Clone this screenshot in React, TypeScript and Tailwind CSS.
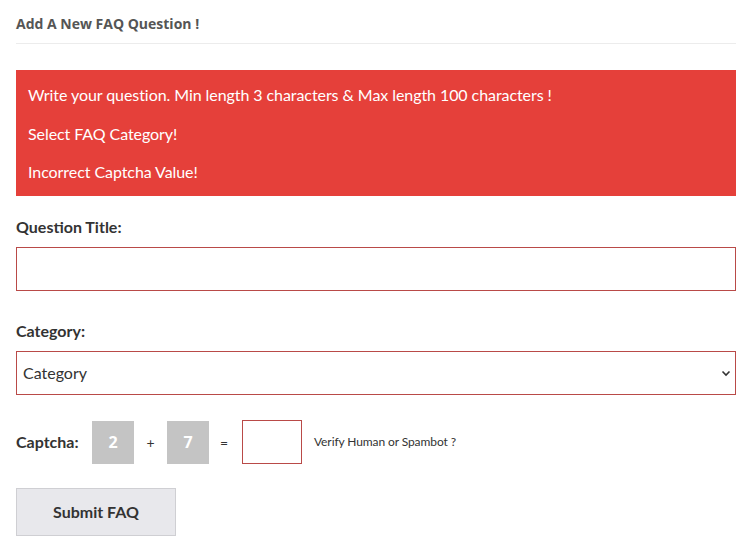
import React from "react";

const errors = [
  "Write your question. Min length 3 characters & Max length 100 characters !",
  "Select FAQ Category!",
  "Incorrect Captcha Value!",
];

const App = () => {
  return (
    <div className="min-h-[550px] bg-white pl-4 pr-[13px] pt-[14px] font-['Lato','Liberation_Sans',sans-serif] text-[#333]">
      <h3 className="border-b border-[#ececec] pb-[9px] font-['Open_Sans',sans-serif] text-[14px] font-bold leading-[20px] text-[#555]">
        Add A New FAQ Question !
      </h3>

      {/* error messages */}
      <div className="mt-[26px] bg-[#e5403a] px-3 pt-[14px] pb-[13px] text-[16px] tracking-[-0.07px] text-white">
        {errors.map((e) => (
          <p key={e} className="leading-[22px] [&:not(:first-child)]:mt-[16.5px]">
            {e}
          </p>
        ))}
      </div>

      <form className="mt-[21px]">
        <label className="block text-[16px] font-bold leading-[20px]">Question Title:</label>
        <input
          type="text"
          className="mt-[10px] block h-[44px] w-full border border-[#b94a48] px-2 outline-none"
        />

        <label className="mt-[30px] block text-[16px] font-bold leading-[20px]">Category:</label>
        <div className="relative mt-[10px]">
          <select className="block h-[44px] w-full appearance-none border border-[#b94a48] bg-white px-[6px] text-[16px] text-[#333] outline-none">
            <option>Category</option>
          </select>
          <svg
            className="pointer-events-none absolute right-[5px] top-1/2 -translate-y-1/2"
            width="10"
            height="10"
            viewBox="0 0 10 10"
          >
            <path d="M1.5 3.5 L5 7 L8.5 3.5" fill="none" stroke="#333" strokeWidth="1.6" />
          </svg>
        </div>

        <div className="mt-[25px] flex items-center">
          <span className="w-[76px] text-[16px] font-bold">Captcha:</span>
          <span className="flex h-[43px] w-[42px] items-center justify-center bg-[#c4c4c4] font-['Open_Sans',sans-serif] text-[16px] font-bold text-white">
            2
          </span>
          <span className="w-[33px] text-center text-[14px]">+</span>
          <span className="flex h-[43px] w-[42px] items-center justify-center bg-[#c4c4c4] font-['Open_Sans',sans-serif] text-[16px] font-bold text-white">
            7
          </span>
          <span className="w-[33px] pr-[3px] text-center text-[14px]">=</span>
          <input
            type="text"
            className="h-[44px] w-[60px] border border-[#b94a48] px-2 outline-none"
          />
          <span className="ml-[12px] text-[12px] tracking-[-0.1px]">Verify Human or Spambot ?</span>
        </div>

        <button
          type="button"
          className="mt-[24px] h-[48px] w-[160px] border border-[#cfcfd3] bg-[#e8e8ec] text-[16px] font-bold text-[#333]"
        >
          Submit FAQ
        </button>
      </form>
    </div>
  );
};

export default App;
